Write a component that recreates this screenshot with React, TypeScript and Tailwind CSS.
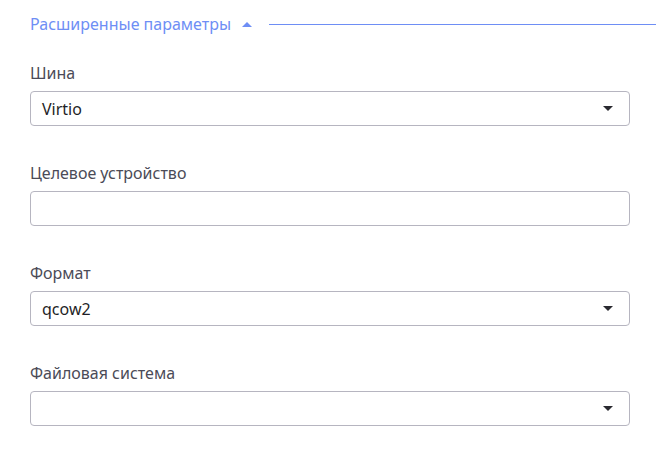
import { ReactNode } from 'react'

function Caret({ up = false, className = '' }: { up?: boolean; className?: string }) {
  return (
    <svg width="10" height="5" viewBox="0 0 10 5" className={className}>
      <path d={up ? 'M0 5 L5 0 L10 5 Z' : 'M0 0 L10 0 L5 5 Z'} fill="currentColor" />
    </svg>
  )
}

function Field({ label, children }: { label: string; children: ReactNode }) {
  return (
    <div className="flex flex-col">
      <label className="text-[16px] leading-[24px] text-[#4b4b57] mb-[6px]">{label}</label>
      {children}
    </div>
  )
}

function Select({ value }: { value?: string }) {
  return (
    <div className="h-[35px] w-full flex items-center justify-between border border-[#b6b5c0] rounded-[4px] pl-[11px] pr-[16px] bg-white">
      <span className="text-[16px] text-[#1f1f27]">{value}</span>
      <Caret className="text-[#2a2a30]" />
    </div>
  )
}

export default function App() {
  const fields = [
    { label: 'Шина', value: 'Virtio', select: true },
    { label: 'Целевое устройство', value: '', select: false },
    { label: 'Формат', value: 'qcow2', select: true },
    { label: 'Файловая система', value: '', select: true },
  ]

  return (
    <div className="w-[658px] h-[452px] bg-white pl-[30px] pt-[13px]" style={{ fontFamily: '"Noto Sans", sans-serif' }}>
      <div className="flex items-center h-[22px]">
        <span className="text-[16px] text-[#6e8ef5]">Расширенные параметры</span>
        <Caret up className="text-[#6e8ef5] ml-[11px]" />
        <div className="flex-1 h-[1px] bg-[#6e8ef5] ml-[17px] mr-[2px]" />
      </div>
      <div className="flex flex-col gap-[35px] pr-[28px] mt-[26px]">
        {fields.map((f) =>
          f.select ? (
            <Field key={f.label} label={f.label}>
              <Select value={f.value} />
            </Field>
          ) : (
            <Field key={f.label} label={f.label}>
              <input
                type="text"
                className="h-[35px] w-full border border-[#b6b5c0] rounded-[4px] px-[11px] text-[16px] outline-none"
              />
            </Field>
          )
        )}
      </div>
    </div>
  )
}
